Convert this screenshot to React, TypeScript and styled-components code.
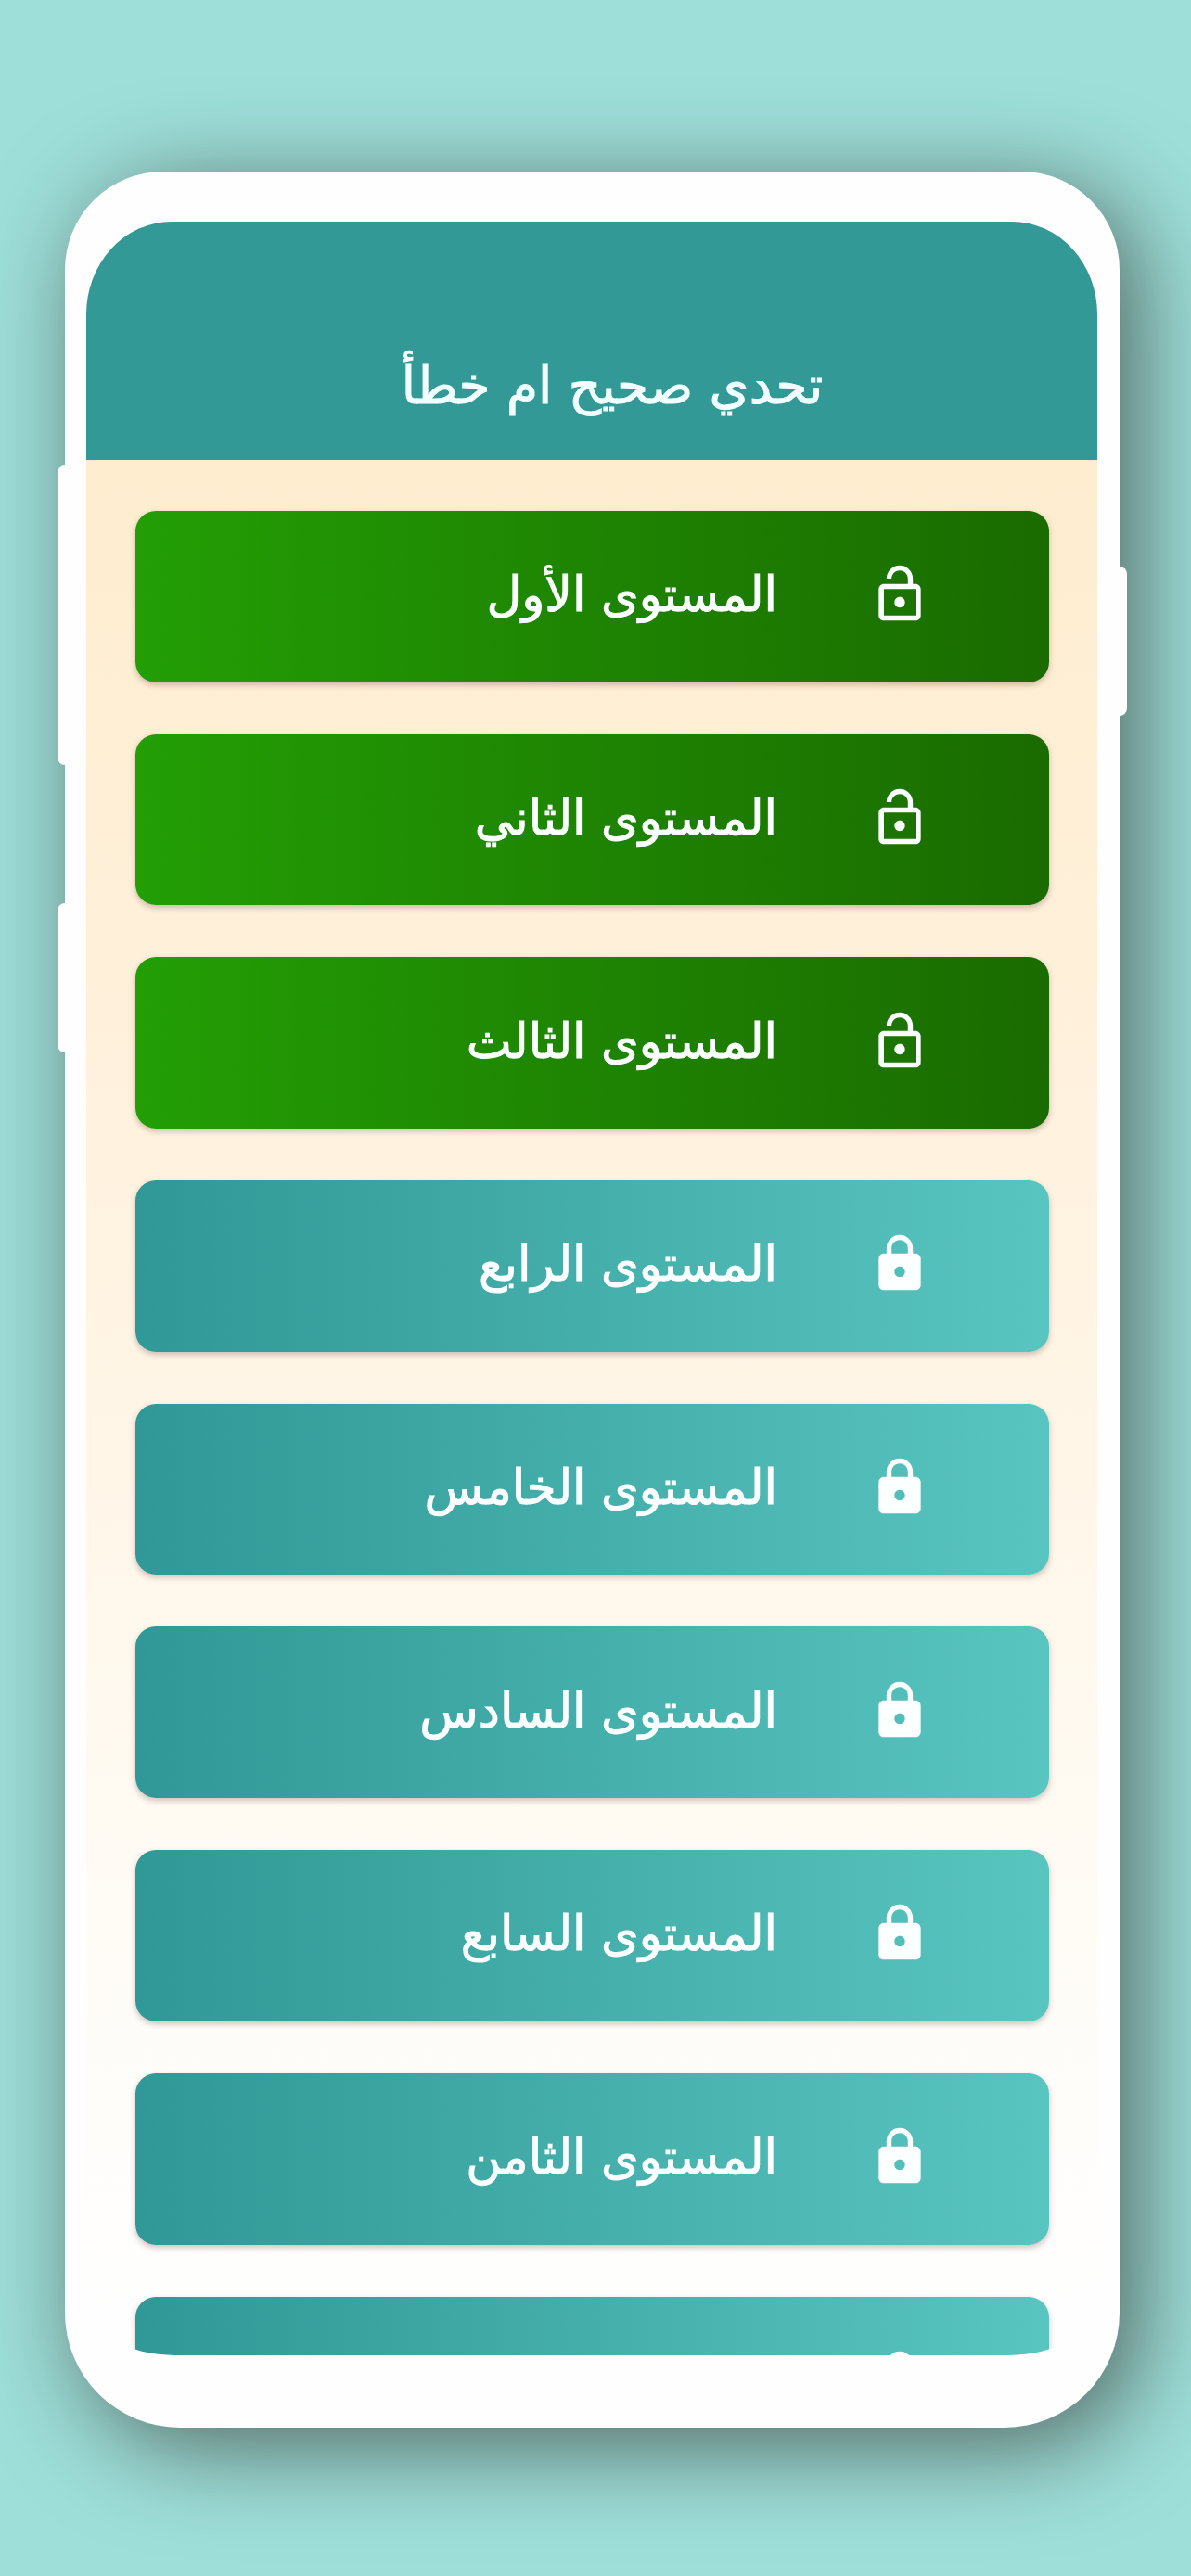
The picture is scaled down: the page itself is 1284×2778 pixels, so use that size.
import React from 'react';
import styled, { createGlobalStyle } from 'styled-components';

const GlobalStyle = createGlobalStyle`
  *, *::before, *::after { box-sizing: border-box; }
  body {
    margin: 0;
    background: #9edfda;
    font-family: "DejaVu Sans", "Noto Sans", sans-serif;
  }
`;

const Stage = styled.main`
  padding: 185px 77px 160px 70px;
`;

const Phone = styled.div`
  position: relative;
  padding: 54px 24px 78px 23px;
  background: #fefefe;
  border-radius: 106px 106px 124px 124px;
  box-shadow: 20px 20px 104px rgba(28, 18, 10, 0.58);
`;

const SideKey = styled.span<{ $side: 'left' | 'right'; $top: number; $length: number }>`
  position: absolute;
  ${({ $side }) => $side}: -8px;
  top: ${({ $top }) => $top}px;
  width: 24px;
  height: ${({ $length }) => $length}px;
  border-radius: 8px;
  background: #fefefe;
`;

const Screen = styled.div`
  position: relative;
  aspect-ratio: 1090 / 2301;
  overflow: hidden;
  border-radius: 92px 92px 96px 96px / 100px 100px 60px 60px;
  background: linear-gradient(180deg, #feedcf 12%, #fff0da 35%, #fff7ea 62%, #fffcf6 80%, #fefefe 98%);
`;

const Header = styled.header`
  display: flex;
  align-items: flex-end;
  justify-content: center;
  height: 257px;
  padding: 0 0 48px 44px;
  background: #329997;
`;

const Title = styled.h1`
  margin: 0;
  color: #f2ffff;
  font-size: 55px;
  font-weight: 400;
  line-height: 64px;
  -webkit-text-stroke: 1px currentColor;
`;

const Levels = styled.ul`
  display: flex;
  flex-direction: column;
  gap: 56px;
  margin: 0;
  padding: 55px 52px 0 53px;
  list-style: none;
`;

const LevelButton = styled.button<{ $open: boolean }>`
  display: flex;
  align-items: center;
  gap: 98px;
  width: 100%;
  aspect-ratio: 16 / 3;
  padding: 0 127px 4px;
  border: 0;
  border-radius: 22px;
  color: #fbffff;
  font: inherit;
  font-size: 52px;
  line-height: 60px;
  text-align: start;
  background: ${({ $open }) =>
    $open
      ? 'linear-gradient(90deg, #239e05, #1e8402 50%, #1a6b00)'
      : 'linear-gradient(90deg, #309896, #59c5c0)'};
  box-shadow: 0 3px 6px rgba(60, 30, 30, 0.26);
`;

const LevelName = styled.span`
  -webkit-text-stroke: 1px currentColor;
`;

const Icon = styled.svg`
  flex: none;
  width: 68px;
  height: 68px;
  fill: currentColor;
`;

const LockIcon = ({ open }: { open: boolean }) => (
  <Icon viewBox="0 0 24 24" aria-hidden="true">
    {open ? (
      <path d="M12 17c1.1 0 2-.9 2-2s-.9-2-2-2-2 .9-2 2 .9 2 2 2zm6-9h-1V6c0-2.76-2.24-5-5-5S7 3.24 7 6h1.9c0-1.71 1.39-3.1 3.1-3.1s3.1 1.39 3.1 3.1v2H6c-1.1 0-2 .9-2 2v10c0 1.1.9 2 2 2h12c1.1 0 2-.9 2-2V10c0-1.1-.9-2-2-2zm0 12H6V10h12v10z" />
    ) : (
      <path d="M18 8h-1V6c0-2.76-2.24-5-5-5S7 3.24 7 6v2H6c-1.1 0-2 .9-2 2v10c0 1.1.9 2 2 2h12c1.1 0 2-.9 2-2V10c0-1.1-.9-2-2-2zm-6 9c-1.1 0-2-.9-2-2s.9-2 2-2 2 .9 2 2-.9 2-2 2zm3.1-9H8.9V6c0-1.71 1.39-3.1 3.1-3.1s3.1 1.39 3.1 3.1v2z" />
    )}
  </Icon>
);

const levels = [
  { name: 'المستوى الأول', open: true },
  { name: 'المستوى الثاني', open: true },
  { name: 'المستوى الثالث', open: true },
  { name: 'المستوى الرابع', open: false },
  { name: 'المستوى الخامس', open: false },
  { name: 'المستوى السادس', open: false },
  { name: 'المستوى السابع', open: false },
  { name: 'المستوى الثامن', open: false },
  { name: '', open: false },
];

export default function App() {
  return (
    <>
      <GlobalStyle />
      <Stage>
        <Phone>
          <SideKey $side="left" $top={317} $length={323} />
          <SideKey $side="left" $top={789} $length={161} />
          <SideKey $side="right" $top={426} $length={161} />
          <Screen dir="rtl" lang="ar">
            <Header>
              <Title>تحدي صحيح ام خطأ</Title>
            </Header>
            <Levels>
              {levels.map((level, index) => (
                <li key={index}>
                  <LevelButton type="button" $open={level.open}>
                    <LockIcon open={level.open} />
                    <LevelName>{level.name}</LevelName>
                  </LevelButton>
                </li>
              ))}
            </Levels>
          </Screen>
        </Phone>
      </Stage>
    </>
  );
}
